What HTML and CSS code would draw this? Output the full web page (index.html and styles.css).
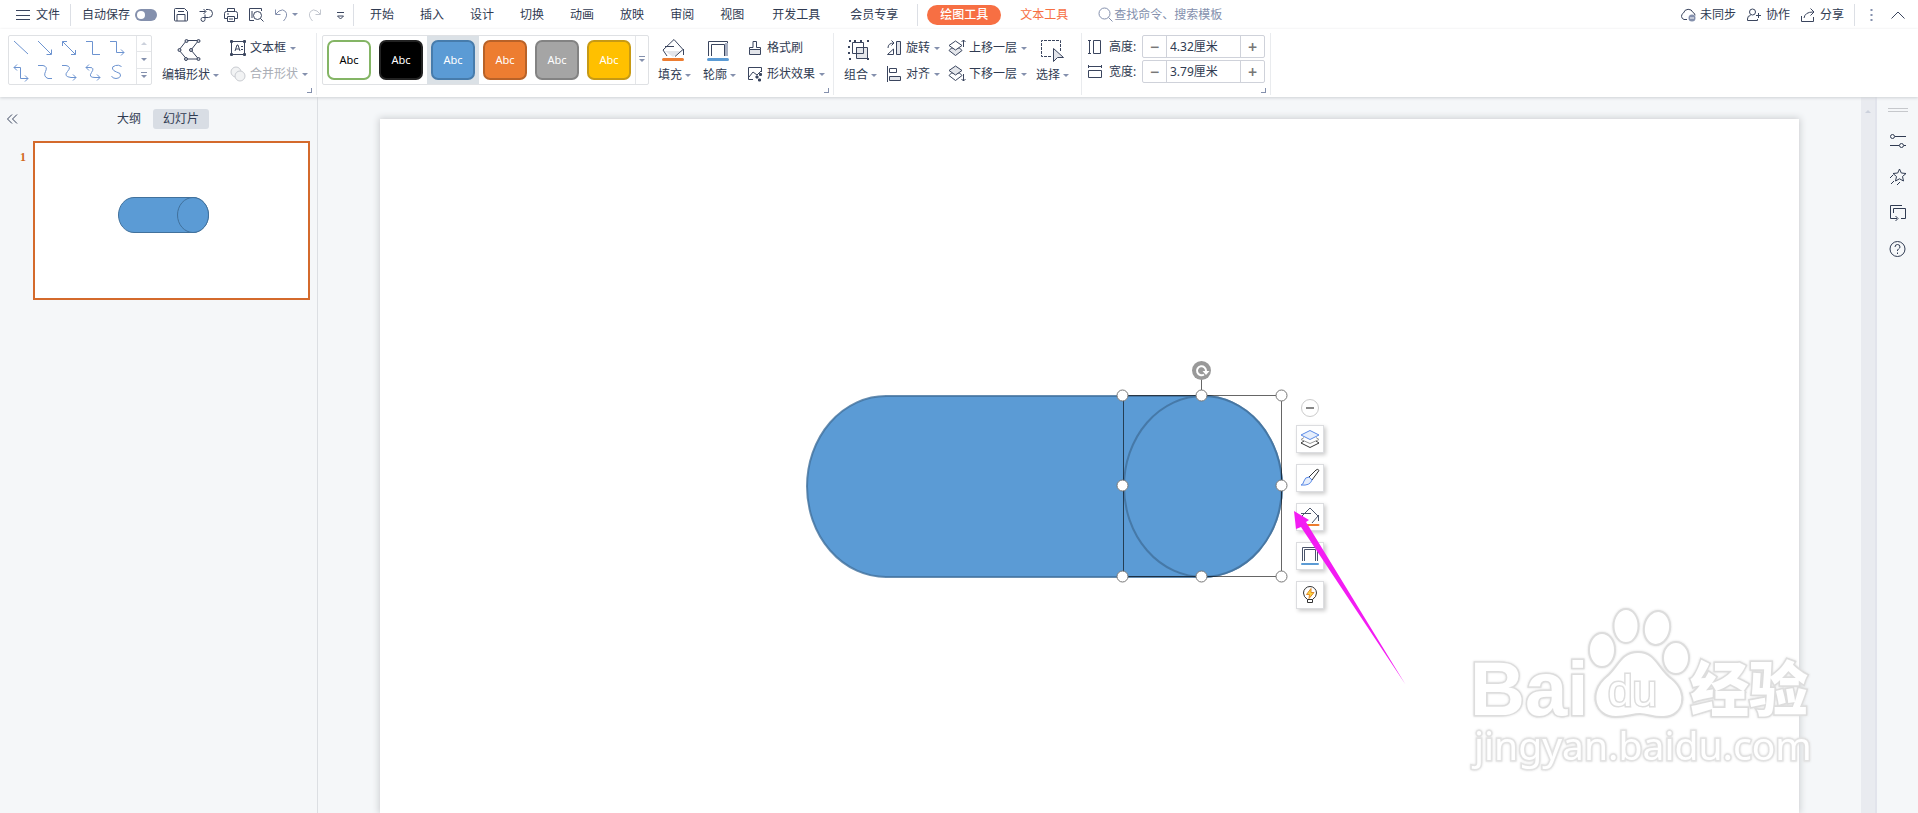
FILE: index.html
```html
<!DOCTYPE html>
<html lang="zh-CN">
<head>
    <meta charset="UTF-8">
    <meta name="viewport" content="width=device-width, initial-scale=1.0">
    <title>演示文稿</title>
    <link rel="stylesheet" href="styles.css">
</head>
<body>
    <header class="topbar">
        <button class="menu-btn">
            <svg width="14" height="14"><path d="M0 2.5h14M0 7.5h14M0 11.5h14"/></svg>文件
        </button>
        <span class="sep"></span>
        <label class="autosave">自动保存<input type="checkbox" class="switch"></label>
        <div class="quick">
            <button aria-label="保存"><svg width="16" height="16"><path d="M2.5 1.5h9l3 3v8.500q0 1-1 1h-11q-1 0-1-1v-10.500q0-1 1-1zM4 14V7.500h8V14M5 4.500h6"/></svg></button>
            <button aria-label="输出为PDF"><svg width="16" height="16"><path d="M1.500 4.500h6M5.500 2l2.500 2.500L5.500 7M8 2.500h2.500a3.500 3.500 0 0 1 0 8H4.500a2 2 0 1 0 2.500 2V7.500"/></svg></button>
            <button aria-label="打印"><svg width="16" height="16"><path d="M4.500 4.500v-3h7v3M4 11.500H1.500v-5q0-2 2-2h9q2 0 2 2v5H12M4.500 9.500h7v5h-7zM6 12h4M4 7h2"/></svg></button>
            <button aria-label="打印预览"><svg width="16" height="16"><path d="M13.500 4V1.500h-12v12H6M4 4v7"/><circle cx="9.500" cy="8.500" r="4"/><path d="M12.500 11.500l3 3"/></svg></button>
            <button class="undo" aria-label="撤销"><svg width="16" height="16"><path d="M2.500 2.500v5h5M3 7l3-3q4-2.500 6.500.500 3 4-2 9.500"/></svg><i class="caret"></i></button>
            <button class="redo" aria-label="恢复"><svg width="16" height="16"><path d="M13.500 2.500v5h-5M13 7l-3-3q-4-2.500-6.500.500-3 4 2 9.500"/></svg></button>
            <button aria-label="自定义快速访问工具栏"><svg width="16" height="16"><path d="M5 5.500h7M5.500 9L8.500 12l3-3z"/></svg></button>
        </div>
        <span class="sep"></span>
        <nav class="tabs">
            <button>开始</button>
            <button>插入</button>
            <button>设计</button>
            <button>切换</button>
            <button>动画</button>
            <button>放映</button>
            <button>审阅</button>
            <button>视图</button>
            <button class="wide">开发工具</button>
            <button class="wide">会员专享</button>
            <span class="sep"></span>
            <button class="active">绘图工具</button>
            <button class="context">文本工具</button>
        </nav>
        <label class="search">
            <svg width="16" height="16"><circle cx="6.500" cy="6.500" r="5.500"/><path d="M10.500 10.500l4 4"/></svg>
            <input type="text" placeholder="查找命令、搜索模板" aria-label="查找命令、搜索模板">
        </label>
        <div class="account">
            <button><svg width="16" height="16"><path d="M7 12.500H4a3.500 3.500 0 0 1-.500-6.500 5 5 0 0 1 9.500-.500 3 3 0 0 1 2 3"/><circle class="dot" cx="12" cy="11" r="3.500"/><path class="white" d="M10 11h4"/></svg>未同步</button>
            <button><svg width="16" height="16"><circle cx="6.500" cy="5" r="3"/><path d="M4.500 8.500q-3 0-3 3.500v1.500h10V12M10 8.500h5M12.500 6v5"/></svg>协作</button>
            <button><svg width="16" height="16"><path d="M1.500 9v5.500h12V10M4 11q1-6 9-6M10.500 1.500L14 5l-3.500 3.500"/></svg>分享</button>
            <span class="sep"></span>
            <button aria-label="更多"><svg width="3" height="14"><path class="dots" d="M.500 2h2M.500 7h2M.500 12h2"/></svg></button>
            <button aria-label="收起功能区"><svg width="14" height="10"><path d="M.500 8.500L7 2l6.500 6.500"/></svg></button>
        </div>
    </header>

    <div class="ribbon">
        <section class="group shapes-group">
            <div class="gallery line-gallery">
                <div class="lines">
                    <button aria-label="直线"><svg width="16" height="16"><path d="M1 1l14 13"/></svg></button>
                    <button aria-label="箭头"><svg width="16" height="16"><path d="M1 1l13 13M14.500 9.500v5h-5"/></svg></button>
                    <button aria-label="双箭头"><svg width="16" height="16"><path d="M1.500 1.500l13 13M14.500 10v4.500H10M1.500 6V1.500H6"/></svg></button>
                    <button aria-label="肘形连接符"><svg width="16" height="16"><path d="M1 1.500h6.500v13H15"/></svg></button>
                    <button aria-label="肘形箭头"><svg width="16" height="16"><path d="M1 1.500h6.500v11H15M12 9.500l3 3-3 3"/></svg></button>
                    <button aria-label="肘形双箭头"><svg width="16" height="16"><path d="M1 3.500h6.500v11H15M12 11.500l3 3-3 3M4 .500l-3 3 3 3"/></svg></button>
                    <button aria-label="曲线连接符"><svg width="16" height="16"><path d="M1 1.500h5q5 1 2.500 6t2.500 7h4"/></svg></button>
                    <button aria-label="曲线箭头"><svg width="16" height="16"><path d="M1 1.500h4q6 1 1.500 6t3.500 6h5M12 10.500l3 3-3 3"/></svg></button>
                    <button aria-label="曲线双箭头"><svg width="16" height="16"><path d="M1 3.500h4q5 0 1.500 5t3.500 5h5M12 10.500l3 3-3 3M4 .500l-3 3 3 3"/></svg></button>
                    <button aria-label="曲线"><svg width="16" height="16"><path d="M12.500 2.500q-3-2-6-1-4 1-3 3.500 1 2 4 3 5 1 4 4-1 2.500-4.500 2.500T2.500 12"/></svg></button>
                </div>
                <div class="scroller">
                    <button aria-label="上一行"><i class="caret up"></i></button>
                    <button aria-label="下一行"><i class="caret"></i></button>
                    <button aria-label="其他"><i class="caret more"></i></button>
                </div>
            </div>
            <button class="tool-lg">
                <svg width="24" height="24"><path d="M9.500 2.500h12L14 12l7.500 9h-12L2 12z"/><g class="node"><circle cx="9.500" cy="3" r="1.500"/><circle cx="21.500" cy="3" r="1.500"/><circle cx="2.500" cy="12" r="1.500"/><circle cx="14" cy="12" r="1.500"/><circle cx="9" cy="21" r="1.500"/><circle cx="21.500" cy="21" r="1.500"/></g></svg>
                <span>编辑形状<i class="caret"></i></span>
            </button>
            <div class="rows">
                <button class="tool">
                    <svg width="16" height="16"><path d="M1.500 1.500h13v13h-13zM5 11l2-6h1l2 6M6 9h3M11 6.500h2M11 9.500h2"/><path class="thick" d="M0 1.500h3M1.500 0v3M13 1.500h3M14.500 0v3M0 14.500h3M1.500 13v3M13 14.500h3M14.500 13v3"/></svg>
                    文本框<i class="caret"></i>
                </button>
                <button class="tool" disabled>
                    <svg width="16" height="16"><circle cx="6" cy="6" r="5"/><circle cx="10" cy="10" r="5"/></svg>
                    合并形状<i class="caret"></i>
                </button>
            </div>
            <button class="launcher" aria-label="设置形状格式"></button>
        </section>

        <section class="group styles-group">
            <div class="gallery style-gallery">
                <div class="swatch-cell"><button class="swatch outline-green">Abc</button></div>
                <div class="swatch-cell"><button class="swatch black">Abc</button></div>
                <div class="swatch-cell selected"><button class="swatch blue">Abc</button></div>
                <div class="swatch-cell"><button class="swatch orange">Abc</button></div>
                <div class="swatch-cell"><button class="swatch gray">Abc</button></div>
                <div class="swatch-cell"><button class="swatch yellow">Abc</button></div>
                <button class="style-more" aria-label="其他样式"><i class="caret more"></i></button>
            </div>
            <button class="tool-lg">
                <svg width="24" height="24"><path class="shade" stroke="none" d="M4 13h16l-8 6z"/><path d="M6 18l-4-6L13 1.500l9 10-8 7M4 8.500h9M22.500 11v6"/><path class="bar-orange" d="M2.500 21.500h19"/></svg>
                <span>填充<i class="caret"></i></span>
            </button>
            <button class="tool-lg">
                <svg width="24" height="24"><path d="M2.500 18V3.500h19V18M5.500 18V6.500h13V18"/><path class="bar-mute" d="M20.500 5v13"/><path class="bar-blue" d="M2.500 21.500h19"/></svg>
                <span>轮廓<i class="caret"></i></span>
            </button>
            <div class="rows">
                <button class="tool">
                    <svg width="16" height="16"><path class="shade" d="M2.500 9.500h11v5h-11z"/><path d="M2.500 9.500v-2H6v-6h3.500v6h4v2"/></svg>
                    格式刷
                </button>
                <button class="tool">
                    <svg width="16" height="16"><path d="M6 13.500H1.500v-12h13V6M2 11l4-5 4 3 4-4"/><path class="thick" d="M10 9.500v3M8.500 11h3M13.500 7v3M12 8.500h3M12.500 12.500v3M11 14h3"/></svg>
                    形状效果<i class="caret"></i>
                </button>
            </div>
            <button class="launcher" aria-label="设置对象格式"></button>
        </section>

        <section class="group arrange-group">
            <button class="tool-lg">
                <svg width="24" height="24"><path class="shade" d="M9.500 9.500h11v11h-11z"/><path d="M5.500 4.500h11v11h-11zM9.500 15V9.500H16"/><path class="thick" d="M2 3h2M2 21h2M20 3h2M20 21h2M7 3h2M13 3h2M2 8v2M2 14v2"/></svg>
                <span>组合<i class="caret"></i></span>
            </button>
            <div class="rows">
                <button class="tool">
                    <svg width="16" height="16"><path class="shade" d="M10.500 1.500h4v13h-4z"/><path d="M1.500 14.500h6V9zM2 8q0-5 6-5M5.500 .500L8 3 5.500 5.500"/></svg>
                    旋转<i class="caret"></i>
                </button>
                <button class="tool">
                    <svg width="16" height="16"><path d="M1.500 0v16M3.500 2.500h7v4h-7z"/><path class="shade" d="M3.500 10.500h11v4h-11z"/></svg>
                    对齐<i class="caret"></i>
                </button>
            </div>
            <div class="rows">
                <button class="tool">
                    <svg width="16" height="16"><path class="shade" d="M2.500 8L0 10.500l6.500 5 6.500-5L10.500 8z"/><path fill="#fff" d="M0 5.500L6.500 1 13 5.500 6.500 10z"/><path d="M14.500 7V0M12.500 2l2-2 2 2"/></svg>
                    上移一层<i class="caret"></i>
                </button>
                <button class="tool">
                    <svg width="16" height="16"><path d="M2.500 7L0 9.500l6.500 5 6.500-5L10.500 7z" fill="#fff"/><path class="shade" d="M0 4.500L6.500 0 13 4.500 6.500 9z"/><path d="M14.500 8v7M12.500 13l2 2 2-2"/></svg>
                    下移一层<i class="caret"></i>
                </button>
            </div>
            <button class="tool-lg select-tool">
                <svg width="24" height="24"><path stroke-dasharray="3 1" d="M12 18.500H2.500v-16h19V13"/><path class="shade" d="M14.500 10.500v13l4-4h6z"/></svg>
                <span>选择<i class="caret"></i></span>
            </button>
        </section>

        <section class="group size-group">
            <div class="size-rows">
                <div class="size-row">
                    <svg width="14" height="14"><path d="M5.500 .500h7v13h-7zM0 .500h3M0 13.500h3M1.500 .500v13"/></svg>
                    <label for="shape-height">高度:</label>
                    <div class="spinner">
                        <button aria-label="减小高度">−</button>
                        <input id="shape-height" type="text" value="4.32厘米">
                        <button aria-label="增大高度">+</button>
                    </div>
                </div>
                <div class="size-row">
                    <svg width="14" height="14"><path d="M.500 5.500h13v7H.500zM.500 0v3M13.500 0v3M.500 1.500h13"/></svg>
                    <label for="shape-width">宽度:</label>
                    <div class="spinner">
                        <button aria-label="减小宽度">−</button>
                        <input id="shape-width" type="text" value="3.79厘米">
                        <button aria-label="增大宽度">+</button>
                    </div>
                </div>
            </div>
            <button class="launcher" aria-label="大小和位置"></button>
        </section>
    </div>

    <main class="workspace">
        <aside class="sidebar">
            <div class="side-head">
                <button class="collapse" aria-label="收起"><svg width="12" height="12"><path d="M5 1.500L.500 6 5 10.500M10 1.500L5.500 6l4.500 4.500"/></svg></button>
                <div class="side-tabs">
                    <button>大纲</button>
                    <button class="on">幻灯片</button>
                </div>
            </div>
            <div class="thumb-row">
                <span class="thumb-no">1</span>
                <div class="thumb">
                    <svg viewBox="0 0 273 155">
                        <path class="shape" d="M99 54.500h59a15.500 17.500 0 0 1 0 35H99a15.500 17.500 0 0 1 0-35z"/>
                        <ellipse class="shape" cx="158" cy="72" rx="15.500" ry="17.500"/>
                    </svg>
                </div>
            </div>
        </aside>

        <div class="canvas">
            <div class="slide">
                <svg class="drawing" width="920" height="480">
                    <path class="shape" d="M506 277h317a79 90.500 0 0 1 0 181H506a79 90.500 0 0 1 0-181z"/>
                    <ellipse class="shape" cx="823" cy="367.500" rx="79" ry="90.500"/>
                    <path class="frame" d="M743.500 276.500h158v181h-158zM821.500 276V260"/>
                    <g class="handle">
                        <circle cx="742.500" cy="276.500" r="5.500"/><circle cx="821.500" cy="276.500" r="5.500"/><circle cx="901.500" cy="276.500" r="5.500"/>
                        <circle cx="742.500" cy="366.500" r="5.500"/><circle cx="901.500" cy="366.500" r="5.500"/>
                        <circle cx="742.500" cy="457.500" r="5.500"/><circle cx="821.500" cy="457.500" r="5.500"/><circle cx="901.500" cy="457.500" r="5.500"/>
                    </g>
                    <circle cx="821.500" cy="251.500" r="9.500" fill="#999" stroke="none"/>
                    <path class="rotate" d="M824 255.500a4.500 4.500 0 1 1 2-3.500"/>
                    <path fill="#fff" stroke="none" d="M822.500 252h7l-3.500 4z"/>
                </svg>
                <div class="float-tools">
                    <button class="float-min" aria-label="收起"></button>
                    <button aria-label="叠放次序"><svg width="20" height="20"><path d="M4 12l-3 2 9 4.500 9-4.500-3-2" stroke="#333"/><path d="M4 8.500L1 10.500l9 4 9-4-3-2" stroke="#999"/><path d="M1 6l9-4.500L19 6l-9 4.500z" fill="#e6eefc" stroke="#5b8ae6"/></svg></button>
                    <button aria-label="格式刷"><svg width="20" height="20"><path d="M9 9l7-7q2-1.500 3 .500L12 12z" stroke="#333"/><path d="M9 9q-4 0-5 4T1 17q9 1 11-5z" fill="#e6eefc" stroke="#5b8ae6"/></svg></button>
                    <button aria-label="填充"><svg width="20" height="20"><path d="M4 12l-2-3 8-8 8 8-6 7M1 6.500h10M18.500 8v6" stroke="#4a546b"/><path class="bar-orange thin" d="M1.500 18h17"/></svg></button>
                    <button aria-label="轮廓"><svg width="20" height="20"><path d="M2.500 15V1.500h15V15M4.500 15V3.500h11V15" stroke="#4a546b"/><path class="bar-blue thin" d="M2 18h16"/></svg></button>
                    <button aria-label="智能推荐"><svg width="20" height="20"><path d="M7.500 14.500Q3.500 12 3.500 8a6.500 6.500 0 0 1 13 0q0 4-4 6.500zM7.500 14.500v3h5v-3" stroke="#333"/><path d="M11 3.500L6.500 9.500h3L9 13.500l5-6h-3z" fill="#fbd53f" stroke="#e08a2b"/></svg></button>
                </div>
                <svg class="pointer" width="116" height="176"><path fill="#f31cf3" d="M1 1l15 9-3 2 99.500 162.500L8 17l-5 2z"/></svg>
            </div>
        </div>

        <div class="vscroll"><i class="caret up"></i></div>

        <aside class="rail">
            <span class="grip"></span>
            <button aria-label="属性"><svg width="18" height="18"><circle cx="3.500" cy="4.500" r="2"/><path d="M6 4.500h11M1 13.500h9M15 13.500h2"/><circle cx="12.500" cy="13.500" r="2"/></svg></button>
            <button aria-label="动画"><svg width="18" height="18"><path d="M10.500 1l1.800 4 4.700.500-3.500 3 1 4.500-4-2.200-4 2.200 1-4.500L4 5.500 8.700 5zM1 10l3-3M2 16l3-3M8 17l3-3"/></svg></button>
            <button aria-label="切换"><svg width="18" height="18"><path d="M13 1.500H1.500v13H8M6.500 12L9 14.500 6.500 17M4.500 9V4.500h12v10H12"/></svg></button>
            <button aria-label="帮助"><svg width="18" height="18"><circle cx="8.500" cy="9" r="7.500"/><path d="M6 7q0-2.500 2.500-2.500T11 7q0 1-1.500 2t-1 2M8.500 12.500V14"/></svg></button>
        </aside>

        <svg class="watermark" width="360" height="180">
            <g class="paw">
                <ellipse cx="142" cy="60" rx="13" ry="17"/>
                <ellipse cx="166" cy="36" rx="12.500" ry="17"/>
                <ellipse cx="197" cy="38" rx="13" ry="17" transform="rotate(10 197 38)"/>
                <ellipse cx="216" cy="68" rx="13" ry="16"/>
                <path d="M178 62c-18 0-20 16-32 25-18 15-12 40 10 40 12 0 16-3 24-3s14 4 24 3c20-1 25-24 8-38-14-10-16-27-34-27z"/>
            </g>
            <text class="wm-bold" x="10" y="125">Bai</text>
            <text class="wm-du" x="148" y="116">du</text>
            <text class="wm-cjk" x="230" y="121">经验</text>
            <text class="wm-url" x="14" y="170">jingyan.baidu.com</text>
        </svg>
    </main>
</body>
</html>
```

FILE: styles.css
```css
* {
    box-sizing: border-box;
}
body {
    margin: 0;
    height: 100vh;
    display: flex;
    flex-direction: column;
    overflow: hidden;
    font-family: "Noto Sans", "Noto Sans CJK SC", sans-serif;
    font-size: 12px;
    line-height: 16px;
    color: #303b52;
    background: #fff;
}
button, input {
    font: inherit;
    color: inherit;
    border: 0;
    margin: 0;
    padding: 0;
    background: none;
}
button {
    display: flex;
    align-items: center;
    white-space: nowrap;
}
svg {
    display: block;
    flex: none;
    fill: none;
    stroke: #3a455e;
    overflow: visible;
}
.caret {
    flex: none;
    border: 3px solid transparent;
    border-top-color: #8490ad;
    border-bottom: 0;
}
.caret.up {
    border: 3px solid transparent;
    border-bottom-color: #ccd1dc;
    border-top: 0;
}
.caret.more {
    position: relative;
}
.caret.more::before {
    content: "";
    position: absolute;
    left: -3px;
    top: -6px;
    width: 6px;
    height: 1px;
    background: #8490ad;
}
.sep {
    flex: none;
    width: 1px;
    height: 22px;
    background: #dcdfe5;
}

/* top bar */
.topbar {
    display: flex;
    align-items: center;
    height: 29px;
    flex: none;
    padding: 0 13px 0 16px;
}
.menu-btn {
    gap: 6px;
    margin-right: 10px;
}
.autosave {
    display: flex;
    align-items: center;
    gap: 5px;
    margin-left: 11px;
}
.switch {
    appearance: none;
    width: 22px;
    height: 12px;
    border-radius: 6px;
    background: #8490ad;
    position: relative;
}
.switch::before {
    content: "";
    position: absolute;
    left: 2px;
    top: 2px;
    width: 8px;
    height: 8px;
    border-radius: 50%;
    background: #fff;
}
.quick {
    display: flex;
    gap: 9px;
    margin: 0 5px 0 16px;
}
.undo {
    gap: 3px;
}
.undo svg {
    stroke: #8490ad;
}
.redo svg {
    stroke: #c3c7cf;
}
.tabs {
    display: flex;
    align-items: center;
    margin-left: 3px;
}
.tabs button {
    padding: 2px 13px;
}
.tabs .wide {
    padding: 2px 15px;
}
.tabs .sep {
    margin: 0 9px 0 4px;
}
.tabs .active {
    background: #f76f43;
    border-radius: 10px;
    color: #fff;
    font-weight: 500;
}
.tabs .context {
    color: #f76f43;
    padding: 2px 19px;
}
.search {
    display: flex;
    align-items: center;
    margin-left: 11px;
}
.search svg {
    stroke: #8490ad;
}
.search input {
    width: 130px;
    outline: 0;
}
.search input::placeholder {
    color: #8490ad;
}
.account {
    display: flex;
    align-items: center;
    margin-left: auto;
}
.account button {
    gap: 4px;
    margin-right: 10px;
}
.account .sep {
    margin-right: 15px;
}
.account .sep ~ button {
    margin-right: 18px;
}
.account button:last-child {
    margin-right: 0;
}
.account .dot {
    fill: #8490ad;
    stroke: none;
}
.account .white {
    stroke: #fff;
}
.account .dots {
    stroke: #8490ad;
    stroke-width: 2;
}

/* ribbon */
.ribbon {
    display: flex;
    flex: none;
    height: 68px;
    position: relative;
    z-index: 1;
    background: #fff;
    box-shadow: 0 1px 3px #cdd0d4;
}
.group {
    display: flex;
    align-items: flex-start;
    position: relative;
    padding: 6px 0 0 5px;
}
.group::after {
    content: "";
    position: absolute;
    right: 0;
    top: 4px;
    width: 1px;
    height: 62px;
    background: #e9ebee;
}
.shapes-group {
    width: 317px;
    padding-left: 8px;
}
.styles-group {
    width: 517px;
}
.arrange-group {
    width: 248px;
    padding-left: 10px;
}
.size-group {
    width: 189px;
    padding-left: 6px;
}
.gallery {
    display: flex;
    height: 50px;
    border: 1px solid #dfe1e4;
    border-radius: 2px;
}
.lines {
    display: grid;
    grid-template-columns: repeat(5, 24px);
}
.lines button {
    justify-content: center;
}
.lines svg {
    stroke: #6c93d0;
}
.line-gallery {
    width: 144px;
    justify-content: space-between;
}
.scroller {
    display: grid;
    width: 15px;
    border-left: 1px solid #e4e6e9;
}
.scroller button {
    justify-content: center;
}
.scroller button + button {
    border-top: 1px solid #e4e6e9;
}
.tool-lg {
    flex-direction: column;
    gap: 5px;
    padding-top: 3px;
}
.tool-lg svg {
    margin-right: 4px;
}
.tool-lg span {
    display: flex;
    align-items: center;
    gap: 3px;
}
.shapes-group .tool-lg {
    margin: 0 11px 0 10px;
}
.styles-group .tool-lg {
    margin-left: 9px;
    margin-right: 3px;
}
.rows {
    display: grid;
    grid-template-rows: 24px 24px;
    gap: 2px;
    padding-top: 1px;
}
.styles-group .rows {
    margin-left: 8px;
}
.arrange-group .rows {
    margin-left: 9px;
}
.arrange-group .select-tool {
    margin-left: 9px;
}
.tool {
    gap: 4px;
}
.tool:disabled {
    color: #a9adb5;
}
.tool:disabled svg {
    stroke: #c9ccd1;
    fill: #f2f3f4;
}
.shade {
    fill: #e3e5ea;
}
.node {
    fill: #c6cad4;
}
.bar-orange {
    stroke: #ed7d31;
    stroke-width: 3;
    stroke-linecap: round;
}
.bar-blue {
    stroke: #5b9bd5;
    stroke-width: 3;
    stroke-linecap: round;
}
.bar-mute {
    stroke: #a9b0c2;
    stroke-width: 3;
}
.thin {
    stroke-width: 2;
}
.thick {
    stroke-width: 2;
}
.launcher {
    position: absolute;
    right: 5px;
    bottom: 4px;
    width: 5px;
    height: 5px;
    border-right: 1px solid #8490ad;
    border-bottom: 1px solid #8490ad;
}
.style-gallery {
    width: 327px;
}
.swatch-cell {
    flex: 0 0 52px;
    display: flex;
    align-items: center;
    justify-content: center;
}
.swatch-cell.selected {
    background: #dbe1e6;
}
.swatch {
    width: 44px;
    height: 40px;
    justify-content: center;
    border: 2px solid;
    border-radius: 7px;
    color: #fff;
    font-size: 11px;
}
.outline-green {
    color: #000;
    border-color: #84b565;
}
.black {
    background: #000;
    border-color: #222;
}
.blue {
    background: #5b9bd5;
    border-color: #477cac;
}
.orange {
    background: #ed7d31;
    border-color: #b86228;
}
.gray {
    background: #a5a5a5;
    border-color: #838383;
}
.yellow {
    background: #ffc000;
    border-color: #c79a14;
}
.style-more {
    flex: 1;
    justify-content: center;
    border-left: 1px solid #e4e6e9;
}
.size-rows {
    display: grid;
    gap: 2px;
}
.size-row {
    display: flex;
    align-items: center;
    height: 23px;
}
.size-row label {
    width: 33px;
    margin-left: 7px;
}
.spinner {
    display: flex;
    width: 123px;
    height: 23px;
    border: 1px solid #cfd2da;
    border-radius: 2px;
}
.spinner button {
    flex: 0 0 23px;
    justify-content: center;
    font-size: 16px;
    font-weight: 600;
    color: #777;
}
.spinner input {
    flex: 1;
    min-width: 0;
    padding-left: 3px;
    border: 1px solid #cfd2da;
    border-width: 0 1px;
}

/* workspace */
.workspace {
    flex: 1;
    min-height: 0;
    display: flex;
    position: relative;
    overflow: hidden;
    background: #f5f7f9;
}
.sidebar {
    flex: 0 0 318px;
    border-right: 1px solid #dcdfe3;
    padding: 12px 7px 0;
}
.side-head {
    display: flex;
    align-items: center;
}
.side-tabs {
    display: flex;
    gap: 1px;
    margin-left: 87px;
}
.side-tabs button {
    padding: 2px 11px;
    border-radius: 3px;
}
.side-tabs .on {
    background: #d8dde4;
    padding: 2px 10px;
}
.thumb-row {
    display: flex;
    margin-top: 12px;
}
.thumb-no {
    width: 26px;
    padding: 8px 7px 0 0;
    text-align: right;
    font-family: "Liberation Serif", serif;
    font-weight: bold;
    color: #d2691e;
}
.thumb {
    flex: 1;
    border: 2px solid #d46a2c;
    background: #fff;
}
.shape {
    fill: #5b9bd5;
    stroke: #41719c;
}
.drawing .shape {
    stroke-width: 2;
    stroke-opacity: .8;
}
.canvas {
    flex: 1;
    display: flex;
    padding: 22px 62px 0;
    overflow: hidden;
}
.slide {
    flex: 1;
    position: relative;
    background: #fff;
    box-shadow: 0 0 7px 1px #cbcdd0;
}
.drawing {
    position: absolute;
    left: 0;
    top: 0;
}
.frame {
    stroke: #000;
    stroke-opacity: .6;
}
.handle {
    fill: #fff;
    stroke: #777;
}
.rotate {
    stroke: #fff;
    stroke-width: 2;
}
.float-tools {
    position: absolute;
    left: 916px;
    top: 280px;
    display: grid;
    gap: 11px;
    justify-items: center;
}
.float-tools button {
    width: 28px;
    height: 28px;
    justify-content: center;
    background: #fff;
    border: 1px solid #dcdde0;
    box-shadow: 2px 2px 4px #ccc;
}
.float-tools .float-min {
    width: 18px;
    height: 18px;
    margin-bottom: -3px;
    border-color: #ccc;
    border-radius: 50%;
    box-shadow: none;
}
.float-min::before {
    content: "";
    width: 8px;
    height: 2px;
    background: #888;
}
.pointer {
    position: absolute;
    left: 913px;
    top: 391px;
    stroke: none;
}
.vscroll {
    flex: 0 0 16px;
    display: flex;
    justify-content: center;
    align-items: flex-start;
    padding-top: 13px;
    background: #e9ebf0;
    border-right: 2px solid #e2e4ec;
}
.rail {
    flex: 0 0 41px;
    display: flex;
    flex-direction: column;
    align-items: center;
    gap: 18px;
    padding-top: 11px;
}
.grip {
    width: 20px;
    height: 4px;
    border: 1px solid #c6c8cc;
    border-width: 1px 0;
    margin-bottom: 2px;
}
.rail svg {
    stroke: #303b52;
}

/* watermark */
.watermark {
    position: absolute;
    right: 98px;
    bottom: 43px;
    stroke: #ddd;
    stroke-width: 2;
    fill: #fff;
    pointer-events: none;
    filter: drop-shadow(0 0 1px #ddd);
}
.watermark text {
    paint-order: stroke;
    stroke-width: 3;
}
.wm-bold {
    font: bold 76px "Liberation Sans", sans-serif;
}
.wm-du {
    font: 44px "Liberation Sans", sans-serif;
}
.wm-cjk {
    font: 900 59px "Noto Sans CJK SC", sans-serif;
}
.watermark .wm-url {
    font: 39px "Noto Sans", sans-serif;
    stroke: #e2e2e2;
}
```
